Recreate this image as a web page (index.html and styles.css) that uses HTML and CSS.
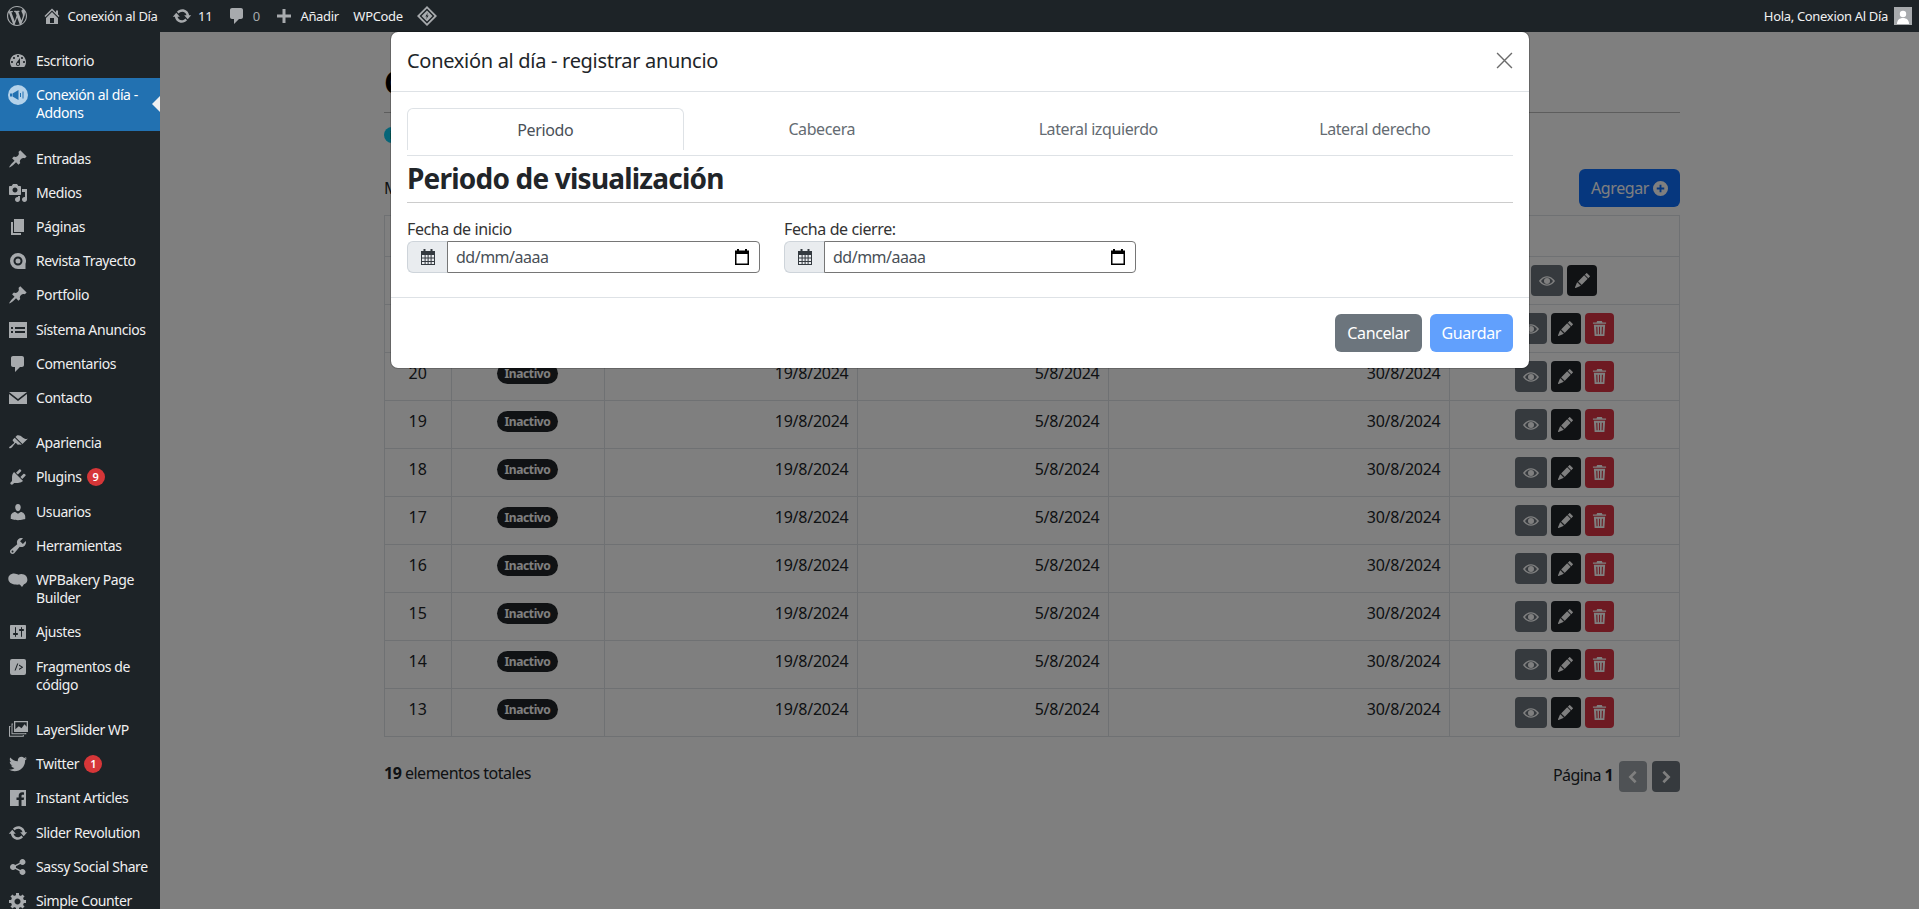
FILE: index.html
```html
<!DOCTYPE html>
<html lang="es">
<head>
    <meta charset="UTF-8">
    <meta name="viewport" content="width=device-width, initial-scale=1.0">
    <title>Conexión al día - Addons</title>
    <link rel="stylesheet" href="styles.css">
</head>
<body>
    <svg class="sprite" aria-hidden="true">
        <symbol id="i-wp" viewBox="0 0 20 20"><path d="M20 10c0-5.51-4.49-10-10-10C4.48 0 0 4.49 0 10c0 5.52 4.48 10 10 10 5.51 0 10-4.48 10-10zM7.78 15.37L4.37 6.22c.55-.02 1.17-.08 1.17-.08.5-.06.44-1.13-.06-1.11 0 0-1.45.11-2.37.11-.18 0-.37 0-.58-.01C4.12 2.69 6.87 1.11 10 1.11c2.33 0 4.45.87 6.05 2.34-.68-.11-1.65.39-1.65 1.58 0 .74.45 1.36.9 2.1.35.61.55 1.36.55 2.46 0 1.49-1.4 5-1.4 5l-3.03-8.37c.54-.02.82-.17.82-.17.5-.05.44-1.25-.06-1.22 0 0-1.44.12-2.38.12-.87 0-2.33-.12-2.33-.12-.5-.03-.56 1.2-.06 1.22l.92.08 1.26 3.41zM17.41 10c.24-.64.74-1.87.43-4.25.7 1.29 1.05 2.71 1.05 4.25 0 3.29-1.73 6.24-4.4 7.78.97-2.59 1.94-5.2 2.92-7.78zM6.1 18.09C3.12 16.65 1.11 13.53 1.11 10c0-1.3.23-2.48.72-3.59C3.25 10.3 4.67 14.2 6.1 18.09zm4.03-6.63l2.58 6.98c-.86.29-1.76.45-2.71.45-.79 0-1.57-.11-2.29-.33.81-2.38 1.62-4.74 2.42-7.1z"/></symbol>
        <symbol id="i-home" viewBox="0 0 20 20"><path d="M16 8.5l1.53 1.53-1.06 1.06L10 4.62l-6.47 6.47-1.06-1.06L10 2.5l4 4v-2h2v4zm-6-2.46l6 5.99V18H4v-5.97zM12 17v-5H8v5h4z"/></symbol>
        <symbol id="i-update" viewBox="0 0 20 20"><path d="M10.2 3.28c3.53 0 6.43 2.61 6.92 6h2.08l-3.5 4-3.5-4h2.32c-.45-1.97-2.21-3.45-4.32-3.45-1.45 0-2.73.71-3.54 1.78L4.95 5.66C6.23 4.2 8.11 3.28 10.2 3.28zm-.4 13.44c-3.52 0-6.43-2.61-6.92-6H.8l3.5-4c1.17 1.33 2.33 2.67 3.5 4H5.48c.45 1.97 2.21 3.45 4.32 3.45 1.45 0 2.73-.71 3.54-1.78l1.71 1.95c-1.28 1.46-3.15 2.38-5.25 2.38z"/></symbol>
        <symbol id="i-comment" viewBox="0 0 20 20"><path d="M5 2h9c1.1 0 2 .9 2 2v7c0 1.1-.9 2-2 2h-2l-5 5v-5H5c-1.1 0-2-.9-2-2V4c0-1.1.9-2 2-2z"/></symbol>
        <symbol id="i-plus" viewBox="0 0 20 20"><path d="M17 8.5v3h-5.5V17h-3v-5.5H3v-3h5.5V3h3v5.5z"/></symbol>
        <symbol id="i-diamond" viewBox="0 0 20 20"><path fill-rule="evenodd" d="M10 0l10 10-10 10L0 10zm0 2.6L2.6 10l7.4 7.4 7.4-7.4z"/><path fill-rule="evenodd" d="M10 4.5l5.5 5.5-5.5 5.5L4.5 10zm.8 2.2L8.4 10.6h1.5l-.7 2.7 2.4-3.9h-1.5z"/></symbol>
        <symbol id="i-dashboard" viewBox="0 0 20 20"><path d="M3.76 16h12.48c1.1-1.37 1.76-3.11 1.76-5 0-4.42-3.58-8-8-8s-8 3.58-8 8c0 1.89.66 3.63 1.76 5zM10 4c.55 0 1 .45 1 1s-.45 1-1 1-1-.45-1-1 .45-1 1-1zM6 6c.55 0 1 .45 1 1s-.45 1-1 1-1-.45-1-1 .45-1 1-1zm8 0c.55 0 1 .45 1 1s-.45 1-1 1-1-.45-1-1 .45-1 1-1zm-5.37 5.55L12 7v6c0 1.1-.9 2-2 2s-2-.9-2-2c0-.57.24-1.08.63-1.45zM4 10c.55 0 1 .45 1 1s-.45 1-1 1-1-.45-1-1 .45-1 1-1zm12 0c.55 0 1 .45 1 1s-.45 1-1 1-1-.45-1-1 .45-1 1-1zm-5 3c0-.55-.45-1-1-1s-1 .45-1 1 .45 1 1 1 1-.45 1-1z"/></symbol>
        <symbol id="i-megaphone" viewBox="0 0 20 20"><circle cx="10" cy="10" r="10" fill="#b4d2ea"/><path fill="#2271b1" d="M2 8.500h2v3H2zM4.500 8.500l6-3.500v10l-6-3.500zM12 8h1v4h-1zM14.500 6.500h1v7h-1z"/></symbol>
        <symbol id="i-pin" viewBox="0 0 20 20"><path d="M10.44 3.02l1.82-1.82 6.36 6.35-1.83 1.82c-1.05-.68-2.48-.57-3.41.36l-.75.75c-.92.93-1.04 2.35-.35 3.41l-1.83 1.82-2.41-2.41-2.8 2.79c-.42.42-3.38 2.71-3.8 2.29s1.86-3.39 2.28-3.81l2.79-2.79L4.1 9.36l1.83-1.82c1.05.69 2.48.57 3.4-.36l.75-.75c.93-.92 1.05-2.35.36-3.41z"/></symbol>
        <symbol id="i-media" viewBox="0 0 20 20"><path d="M13 11V4c0-.55-.45-1-1-1h-1.67L9 1H5L3.67 3H2c-.55 0-1 .45-1 1v7c0 .55.45 1 1 1h10c.55 0 1-.45 1-1zM7 4.500c1.380 0 2.500 1.120 2.500 2.500S8.380 9.500 7 9.500 4.500 8.380 4.500 7 5.620 4.500 7 4.500zM14 6h5v10.500c0 1.380-1.120 2.500-2.500 2.500S14 17.880 14 16.500s1.120-2.500 2.500-2.500c.17 0 .34.02.5.05V9h-3V6zm-4 8.050V13h2v3.500c0 1.380-1.120 2.500-2.500 2.500S7 17.880 7 16.500 8.120 14 9.500 14c.17 0 .34.02.5.05z"/></symbol>
        <symbol id="i-page" viewBox="0 0 20 20"><path d="M6 15V2h10v13H6zm-1 1h8v2H3V5h2v11z"/></symbol>
        <symbol id="i-revista" viewBox="0 0 20 20"><path fill-rule="evenodd" d="M10 2a8 8 0 0 1 7.500 10.800V18H10a8 8 0 0 1 0-16zm0 3.500a4.500 4.500 0 1 0 0 9 4.500 4.500 0 0 0 0-9zm0 2a2.500 2.500 0 1 1 0 5 2.500 2.500 0 0 1 0-5z"/></symbol>
        <symbol id="i-list" viewBox="0 0 20 20"><path fill-rule="evenodd" d="M1 2h18v16H1zM3 7v2h2V7zm4 0v2h10V7zm-4 4v2h2v-2zm4 0v2h10v-2z"/></symbol>
        <symbol id="i-email" viewBox="0 0 20 20"><path d="M1 4h18l-9 7zM1 6l9 7 9-7v10H1z"/></symbol>
        <symbol id="i-appearance" viewBox="0 0 20 20"><path d="M14.480 11.060L7.410 3.990l1.500-1.500c.5-.56 2.300-.47 3.510.32 1.210.8 1.430 1.280 2.910 2.100 1.180.64 2.450 1.260 4.450.85zm-.71.71L6.700 4.700 4.930 6.470c-.39.39-.39 1.020 0 1.410l1.060 1.060c.39.39.39 1.030 0 1.420-.6.6-1.430 1.110-2.210 1.690-.35.26-.7.53-1.010.84C1.430 13.230.76 14.550 1.300 15.100c.55.54 1.870-.13 3.210-1.470.31-.31.58-.66.84-1.010.58-.78 1.090-1.610 1.690-2.210.39-.39 1.020-.39 1.410 0l1.060 1.060c.39.39 1.020.39 1.410 0z"/></symbol>
        <symbol id="i-plugin" viewBox="0 0 20 20"><path d="M13.110 4.360L9.870 7.600 8 5.730l3.240-3.240c.35-.34 1.050-.2 1.560.32.52.51.66 1.210.31 1.550zm-8 1.770l.91-1.120 9.010 9.010-1.190.84c-.71.71-2.630 1.160-3.820 1.160H6.140L4.900 17.260c-.59.59-1.540.59-2.120 0-.59-.58-.59-1.530 0-2.120l1.240-1.240v-3.880c0-1.130.4-3.190 1.090-3.890zm7.260 3.970l3.240-3.240c.34-.35 1.040-.21 1.550.31.52.51.66 1.210.31 1.550l-3.240 3.250z"/></symbol>
        <symbol id="i-users" viewBox="0 0 20 20"><path d="M10 9.250c-2.270 0-2.730-3.440-2.730-3.440C7 4.020 7.820 2 9.970 2c2.160 0 2.980 2.020 2.710 3.810 0 0-.41 3.440-2.680 3.440zm0 2.570L12.720 10c2.390 0 4.520 2.330 4.520 4.530v2.490s-3.650 1.130-7.240 1.130c-3.650 0-7.240-1.130-7.240-1.130v-2.490c0-2.250 1.940-4.480 4.470-4.480z"/></symbol>
        <symbol id="i-tools" viewBox="0 0 20 20"><path d="M16.680 9.770c-1.340 1.340-3.300 1.670-4.950.99l-5.410 6.520c-.99.99-2.590.99-3.580 0s-.99-2.590 0-3.570l6.520-5.420c-.68-1.650-.35-3.610.99-4.950 1.280-1.280 3.120-1.620 4.720-1.060l-2.890 2.890 2.820 2.820 2.860-2.870c.53 1.580.18 3.390-1.080 4.650zM3.810 16.210c.4.39 1.040.39 1.430 0 .4-.4.4-1.040 0-1.430-.39-.4-1.030-.4-1.430 0-.39.39-.39 1.030 0 1.430z"/></symbol>
        <symbol id="i-bakery" viewBox="0 0 20 20"><path d="M6 3.500c2 0 3 .8 4.500 1.200C12 3.800 14 3.500 16 4.500c2.500 1.200 3.800 3.700 3.300 6.300-.4 2-1.800 3.100-3.300 3.400l-2 2.800-2.300-2.500c-1.600.2-3.300.2-5 0C3 14.100.4 12 .3 8.800.2 5.600 3 3.500 6 3.500z"/></symbol>
        <symbol id="i-settings" viewBox="0 0 20 20"><path d="M18 16V4c0-.55-.45-1-1-1H3c-.55 0-1 .45-1 1v12c0 .55.45 1 1 1h14c.55 0 1-.45 1-1zM8 11h1c.55 0 1 .45 1 1s-.45 1-1 1H8v1.500c0 .28-.22.5-.5.5s-.5-.22-.5-.5V13H6c-.55 0-1-.45-1-1s.45-1 1-1h1V5.500c0-.28.22-.5.5-.5s.5.22.5.500V11zm5-2h-1c-.55 0-1-.45-1-1s.45-1 1-1h1V5.500c0-.28.22-.5.5-.5s.5.22.5.5V7h1c.55 0 1 .45 1 1s-.45 1-1 1h-1v5.500c0 .28-.22.5-.5.5s-.5-.22-.5-.5V9z"/></symbol>
        <symbol id="i-code" viewBox="0 0 20 20"><path fill-rule="evenodd" d="M4 2h12a2 2 0 0 1 2 2v12a2 2 0 0 1-2 2H4a2 2 0 0 1-2-2V4a2 2 0 0 1 2-2zm5.200 4.500L6.500 13.500h1.100l2.700-7zM11 7.500v1.300l2.500 1.500-2.500 1.500v1.300l4-2.500v-.6z"/></symbol>
        <symbol id="i-layers" viewBox="0 0 20 20"><path fill-rule="evenodd" d="M6 1h14v11H6zm1.300 1.300v7l3.500-3 2.700 2 3-4 2.200 2.500V2.300z"/><path d="M3.500 3.500H5v1H4.500v8.800h12.800V13h1v1.300h-14.800z"/><path d="M1 6h1.500v1H2v8.800h12.800v-.8h1v1.800H1z"/></symbol>
        <symbol id="i-twitter" viewBox="0 0 20 20"><path d="M18.940 4.460c-.49.73-1.110 1.380-1.830 1.900.01.15.01.31.01.47 0 4.850-3.690 10.440-10.430 10.440-2.070 0-4-.61-5.630-1.650.29.03.58.05.88.05 1.720 0 3.300-.59 4.550-1.570-1.600-.03-2.950-1.090-3.420-2.550.22.04.45.07.69.07.33 0 .66-.05.96-.13-1.670-.34-2.940-1.820-2.940-3.600v-.04c.5.27 1.060.44 1.660.46-.98-.66-1.630-1.780-1.630-3.060 0-.67.18-1.300.5-1.840 1.810 2.220 4.510 3.680 7.560 3.830-.06-.27-.1-.55-.1-.84 0-2.020 1.650-3.660 3.670-3.660 1.060 0 2.010.44 2.680 1.160.83-.17 1.620-.47 2.330-.89-.28.85-.85 1.570-1.610 2.040.74-.09 1.440-.28 2.100-.57z"/></symbol>
        <symbol id="i-facebook" viewBox="0 0 20 20"><path d="M2 2h16v16h-4.500v-6h2.200l.4-2.500h-2.600V8c0-.8.3-1.300 1.300-1.300H16V4.400c-.4 0-1.100-.1-1.900-.1-2.100 0-3.400 1.200-3.400 3.400v1.800H8.500V12h2.200v6H2z"/></symbol>
        <symbol id="i-share" viewBox="0 0 20 20"><path d="M14.500 12q1.240 0 2.120.88T17.500 15t-.88 2.120-2.120.88-2.120-.88T11.500 15q0-.34.09-.69l-4.380-2.300Q6.320 13 5 13q-1.240 0-2.120-.88T2 10t.88-2.120T5 7q1.300 0 2.210.99l4.380-2.300q-.09-.35-.09-.69 0-1.240.88-2.120T14.500 2t2.120.88T17.500 5t-.88 2.120T14.500 8q-1.300 0-2.210-.99l-4.380 2.300Q8 9.660 8 10t-.09.69l4.380 2.300q.89-.99 2.210-.99z"/></symbol>
        <symbol id="i-gear" viewBox="0 0 20 20"><path d="M18 12h-2.180c-.17.7-.44 1.350-.81 1.930l1.540 1.540-2.100 2.100-1.540-1.540c-.58.36-1.230.63-1.910.79V19H8v-2.180c-.68-.16-1.330-.43-1.910-.79l-1.540 1.540-2.120-2.120 1.540-1.540c-.36-.58-.63-1.230-.79-1.910H1V9.030h2.170c.16-.7.44-1.350.8-1.940L2.430 5.550l2.100-2.100 1.540 1.540c.58-.37 1.240-.64 1.930-.81V2h3v2.180c.68.16 1.330.43 1.910.79l1.540-1.540 2.120 2.120-1.540 1.540c.36.59.64 1.240.8 1.940H18V12zm-8.500 1.500c1.660 0 3-1.340 3-3s-1.340-3-3-3-3 1.340-3 3 1.340 3 3 3z"/></symbol>
        <symbol id="i-eye" viewBox="0 0 16 16"><path fill-rule="evenodd" d="M0 8s3-4.800 8-4.800S16 8 16 8s-3 4.800-8 4.800S0 8 0 8zm8-3.600c-2.600 0-4.700 1.600-6 3.600 1.300 2 3.400 3.600 6 3.600s4.700-1.600 6-3.600c-1.300-2-3.400-3.600-6-3.600z"/><circle cx="8" cy="8" r="3"/></symbol>
        <symbol id="i-pencil" viewBox="0 0 16 16"><path d="M12.854.146a.5.5 0 0 0-.707 0L10.500 1.793 14.207 5.500l1.647-1.646a.5.5 0 0 0 0-.708l-3-3zm.646 6.061L9.793 2.500 3.293 9H3.500a.5.5 0 0 1 .5.500v.5h.5a.5.5 0 0 1 .5.5v.5h.5a.5.5 0 0 1 .5.5v.5h.5a.5.5 0 0 1 .5.5v.207l6.500-6.500zm-7.468 7.468A.5.5 0 0 1 6 13.500V13h-.5a.5.5 0 0 1-.5-.5V12h-.5a.5.5 0 0 1-.5-.5V11h-.5a.5.5 0 0 1-.5-.5V10h-.5a.499.499 0 0 1-.175-.032l-.179.178a.5.5 0 0 0-.11.168l-2 5a.5.5 0 0 0 .65.65l5-2a.5.5 0 0 0 .168-.11l.178-.178z"/></symbol>
        <symbol id="i-trash" viewBox="0 0 16 16"><path fill-rule="evenodd" d="M5.500 0h5l.7 1.500H15V3H1V1.500h3.800zM2 4h12l-.8 12H2.800zm2.500 2l.3 8h1.200l-.3-8zm3 0v8h1V6zm3 0l-.3 8h1.200l.3-8z"/></symbol>
        <symbol id="i-calendar" viewBox="0 0 16 16"><path fill-rule="evenodd" d="M3.500 0h2v2h5V0h2v2H15v14H1V2h2.500zM2 6v2.500h2.600V6zm3.600 0v2.500h2V6zm3 0v2.500h2V6zm3 0v2.500H14V6zM2 9.500V12h2.600V9.500zm3.600 0V12h2V9.500zm3 0V12h2V9.500zm3 0V12H14V9.500zM2 13v2h2.600v-2zm3.600 0v2h2v-2zm3 0v2h2v-2zm3 0v2H14v-2z"/></symbol>
        <symbol id="i-picker" viewBox="0 0 16 16"><path fill-rule="evenodd" d="M3 0h2v1.500h6V0h2v1.500h2V16H1V1.500h2zM2.500 5v9.500h11V5z"/></symbol>
    </svg>

    <header class="adminbar">
        <div class="bar-group">
            <a class="bar-item"><svg class="bar-icon"><use href="#i-wp"/></svg></a>
            <a class="bar-item"><svg class="bar-icon"><use href="#i-home"/></svg>Conexión al Día</a>
            <a class="bar-item"><svg class="bar-icon"><use href="#i-update"/></svg>11</a>
            <a class="bar-item bar-muted"><svg class="bar-icon"><use href="#i-comment"/></svg>0</a>
            <a class="bar-item"><svg class="bar-icon"><use href="#i-plus"/></svg>Añadir</a>
            <a class="bar-item">WPCode</a>
            <a class="bar-item"><svg class="bar-icon"><use href="#i-diamond"/></svg></a>
        </div>
        <a class="bar-user">Hola, Conexion Al Día
            <svg class="avatar" viewBox="0 0 16 16"><rect width="16" height="16" fill="#a7aaad"/><circle cx="8" cy="6" r="3.200" fill="#fff"/><path d="M2 16c0-4 2.500-6 6-6s6 2 6 6z" fill="#fff"/></svg>
        </a>
    </header>

    <div class="layout">
        <nav class="sidemenu">
            <a class="menu-item"><svg class="menu-icon"><use href="#i-dashboard"/></svg>Escritorio</a>
            <a class="menu-item active"><svg class="menu-icon"><use href="#i-megaphone"/></svg>Conexión al día - Addons</a>
            <div class="menu-sep"></div>
            <a class="menu-item"><svg class="menu-icon"><use href="#i-pin"/></svg>Entradas</a>
            <a class="menu-item"><svg class="menu-icon"><use href="#i-media"/></svg>Medios</a>
            <a class="menu-item"><svg class="menu-icon"><use href="#i-page"/></svg>Páginas</a>
            <a class="menu-item"><svg class="menu-icon"><use href="#i-revista"/></svg>Revista Trayecto</a>
            <a class="menu-item"><svg class="menu-icon"><use href="#i-pin"/></svg>Portfolio</a>
            <a class="menu-item"><svg class="menu-icon"><use href="#i-list"/></svg>Sístema Anuncios</a>
            <a class="menu-item"><svg class="menu-icon"><use href="#i-comment"/></svg>Comentarios</a>
            <a class="menu-item"><svg class="menu-icon"><use href="#i-email"/></svg>Contacto</a>
            <div class="menu-sep"></div>
            <a class="menu-item"><svg class="menu-icon"><use href="#i-appearance"/></svg>Apariencia</a>
            <a class="menu-item"><svg class="menu-icon"><use href="#i-plugin"/></svg>Plugins <span class="count">9</span></a>
            <a class="menu-item"><svg class="menu-icon"><use href="#i-users"/></svg>Usuarios</a>
            <a class="menu-item"><svg class="menu-icon"><use href="#i-tools"/></svg>Herramientas</a>
            <a class="menu-item"><svg class="menu-icon"><use href="#i-bakery"/></svg>WPBakery Page Builder</a>
            <a class="menu-item"><svg class="menu-icon"><use href="#i-settings"/></svg>Ajustes</a>
            <a class="menu-item"><svg class="menu-icon"><use href="#i-code"/></svg>Fragmentos de código</a>
            <div class="menu-sep"></div>
            <a class="menu-item"><svg class="menu-icon"><use href="#i-layers"/></svg>LayerSlider WP</a>
            <a class="menu-item"><svg class="menu-icon"><use href="#i-twitter"/></svg>Twitter <span class="count">1</span></a>
            <a class="menu-item"><svg class="menu-icon"><use href="#i-facebook"/></svg>Instant Articles</a>
            <a class="menu-item"><svg class="menu-icon"><use href="#i-update"/></svg>Slider Revolution</a>
            <a class="menu-item"><svg class="menu-icon"><use href="#i-share"/></svg>Sassy Social Share</a>
            <a class="menu-item"><svg class="menu-icon"><use href="#i-gear"/></svg>Simple Counter</a>
        </nav>

        <main class="content">
            <h1 class="page-title">C</h1>
            <p class="info-line"><span class="info-dot">i</span></p>
            <div class="toolbar">
                <span>M</span>
                <button class="btn btn-add">Agregar
                    <svg class="add-icon" viewBox="0 0 16 16"><path fill-rule="evenodd" d="M8 0a8 8 0 1 1 0 16A8 8 0 0 1 8 0zM7 4v3H4v2h3v3h2V9h3V7H9V4z"/></svg>
                </button>
            </div>

            <table class="ads">
                <colgroup>
                    <col class="c-id"><col class="c-state"><col class="c-date1"><col class="c-date2"><col class="c-date3"><col class="c-actions">
                </colgroup>
                <thead>
                    <tr><th></th><th></th><th></th><th></th><th></th><th></th></tr>
                </thead>
                <tbody>
                    <tr>
                        <td></td><td></td><td></td><td></td><td></td>
                        <td class="center"><a class="act act-view"><svg><use href="#i-eye"/></svg></a> <a class="act act-edit"><svg><use href="#i-pencil"/></svg></a></td>
                    </tr>
                    <tr>
                        <td></td><td></td><td></td><td></td><td></td>
                        <td class="center"><a class="act act-view"><svg><use href="#i-eye"/></svg></a> <a class="act act-edit"><svg><use href="#i-pencil"/></svg></a> <a class="act act-del"><svg><use href="#i-trash"/></svg></a></td>
                    </tr>
                    <tr>
                        <td class="center">20</td><td class="center"><span class="badge">Inactivo</span></td>
                        <td class="right">19/8/2024</td><td class="right">5/8/2024</td><td class="right">30/8/2024</td>
                        <td class="center"><a class="act act-view"><svg><use href="#i-eye"/></svg></a> <a class="act act-edit"><svg><use href="#i-pencil"/></svg></a> <a class="act act-del"><svg><use href="#i-trash"/></svg></a></td>
                    </tr>
                    <tr>
                        <td class="center">19</td><td class="center"><span class="badge">Inactivo</span></td>
                        <td class="right">19/8/2024</td><td class="right">5/8/2024</td><td class="right">30/8/2024</td>
                        <td class="center"><a class="act act-view"><svg><use href="#i-eye"/></svg></a> <a class="act act-edit"><svg><use href="#i-pencil"/></svg></a> <a class="act act-del"><svg><use href="#i-trash"/></svg></a></td>
                    </tr>
                    <tr>
                        <td class="center">18</td><td class="center"><span class="badge">Inactivo</span></td>
                        <td class="right">19/8/2024</td><td class="right">5/8/2024</td><td class="right">30/8/2024</td>
                        <td class="center"><a class="act act-view"><svg><use href="#i-eye"/></svg></a> <a class="act act-edit"><svg><use href="#i-pencil"/></svg></a> <a class="act act-del"><svg><use href="#i-trash"/></svg></a></td>
                    </tr>
                    <tr>
                        <td class="center">17</td><td class="center"><span class="badge">Inactivo</span></td>
                        <td class="right">19/8/2024</td><td class="right">5/8/2024</td><td class="right">30/8/2024</td>
                        <td class="center"><a class="act act-view"><svg><use href="#i-eye"/></svg></a> <a class="act act-edit"><svg><use href="#i-pencil"/></svg></a> <a class="act act-del"><svg><use href="#i-trash"/></svg></a></td>
                    </tr>
                    <tr>
                        <td class="center">16</td><td class="center"><span class="badge">Inactivo</span></td>
                        <td class="right">19/8/2024</td><td class="right">5/8/2024</td><td class="right">30/8/2024</td>
                        <td class="center"><a class="act act-view"><svg><use href="#i-eye"/></svg></a> <a class="act act-edit"><svg><use href="#i-pencil"/></svg></a> <a class="act act-del"><svg><use href="#i-trash"/></svg></a></td>
                    </tr>
                    <tr>
                        <td class="center">15</td><td class="center"><span class="badge">Inactivo</span></td>
                        <td class="right">19/8/2024</td><td class="right">5/8/2024</td><td class="right">30/8/2024</td>
                        <td class="center"><a class="act act-view"><svg><use href="#i-eye"/></svg></a> <a class="act act-edit"><svg><use href="#i-pencil"/></svg></a> <a class="act act-del"><svg><use href="#i-trash"/></svg></a></td>
                    </tr>
                    <tr>
                        <td class="center">14</td><td class="center"><span class="badge">Inactivo</span></td>
                        <td class="right">19/8/2024</td><td class="right">5/8/2024</td><td class="right">30/8/2024</td>
                        <td class="center"><a class="act act-view"><svg><use href="#i-eye"/></svg></a> <a class="act act-edit"><svg><use href="#i-pencil"/></svg></a> <a class="act act-del"><svg><use href="#i-trash"/></svg></a></td>
                    </tr>
                    <tr>
                        <td class="center">13</td><td class="center"><span class="badge">Inactivo</span></td>
                        <td class="right">19/8/2024</td><td class="right">5/8/2024</td><td class="right">30/8/2024</td>
                        <td class="center"><a class="act act-view"><svg><use href="#i-eye"/></svg></a> <a class="act act-edit"><svg><use href="#i-pencil"/></svg></a> <a class="act act-del"><svg><use href="#i-trash"/></svg></a></td>
                    </tr>
                </tbody>
            </table>

            <div class="table-foot">
                <span class="foot-total"><b>19</b> elementos totales</span>
                <div class="pager">
                    <span class="page-label">Página <b>1</b></span>
                    <a class="page-btn disabled"><svg viewBox="0 0 16 16"><path d="M11 2L5 8l6 6" /></svg></a>
                    <a class="page-btn"><svg viewBox="0 0 16 16"><path d="M5 2l6 6-6 6" /></svg></a>
                </div>
            </div>
            <div class="backdrop"></div>
        </main>
    </div>

    <div class="modal">
        <div class="modal-header">
            <h5 class="modal-title">Conexión al día - registrar anuncio</h5>
            <svg class="modal-close" viewBox="0 0 16 16"><path d="M1 1l14 14M15 1L1 15"/></svg>
        </div>
        <div class="modal-body">
            <div class="tabs">
                <a class="tab active">Periodo</a>
                <a class="tab">Cabecera</a>
                <a class="tab">Lateral izquierdo</a>
                <a class="tab">Lateral derecho</a>
            </div>
            <h3 class="section-title">Periodo de visualización</h3>
            <div class="date-row">
                <div>
                    <label class="field-label">Fecha de inicio</label>
                    <div class="input-group">
                        <span class="input-addon"><svg><use href="#i-calendar"/></svg></span>
                        <div class="date-input"><input type="text" placeholder="dd/mm/aaaa"><svg><use href="#i-picker"/></svg></div>
                    </div>
                </div>
                <div>
                    <label class="field-label">Fecha de cierre:</label>
                    <div class="input-group">
                        <span class="input-addon"><svg><use href="#i-calendar"/></svg></span>
                        <div class="date-input"><input type="text" placeholder="dd/mm/aaaa"><svg><use href="#i-picker"/></svg></div>
                    </div>
                </div>
            </div>
        </div>
        <div class="modal-footer">
            <button class="btn btn-cancel">Cancelar</button>
            <button class="btn btn-save">Guardar</button>
        </div>
    </div>
</body>
</html>
```

FILE: styles.css
```css
* {
    box-sizing: border-box;
}
html, body {
    height: 909px;
    overflow: hidden;
}
body {
    margin: 0;
    font-family: "Noto Sans", "Open Sans", sans-serif;
    font-size: 14px;
    color: #212529;
    background-color: #fff;
}
.sprite {
    display: none;
}

/* admin bar */
.adminbar {
    display: flex;
    justify-content: space-between;
    height: 32px;
    background-color: #1d2327;
    color: #f0f0f1;
    font-size: 13px;
    letter-spacing: -0.32px;
}
.bar-group {
    display: flex;
    padding-left: 7px;
}
.bar-item {
    display: flex;
    align-items: center;
    gap: 6px;
    padding-right: 14.5px;
}
.bar-icon {
    width: 20px;
    height: 20px;
    fill: #a7aaad;
}
.bar-muted {
    color: #a7aaad;
}
.bar-user {
    display: flex;
    align-items: center;
    gap: 6px;
    padding-right: 7px;
}
.avatar {
    width: 18px;
    height: 18px;
    border: 1px solid #a7aaad;
}

/* side menu */
.layout {
    display: flex;
    height: 877px;
}
.sidemenu {
    flex: 0 0 160px;
    padding-top: 12px;
    background-color: #1d2327;
    color: #f0f0f1;
    overflow: hidden;
}
.menu-item {
    display: block;
    position: relative;
    padding: 8px 8px 8px 36px;
    line-height: 18.2px;
    letter-spacing: -0.4px;
}
.menu-icon {
    position: absolute;
    left: 8px;
    top: 7px;
    width: 20px;
    height: 20px;
    fill: #a7aaad;
}
.menu-item.active {
    background-color: #2271b1;
    color: #fff;
}
.menu-item.active::after {
    content: "";
    position: absolute;
    right: 0;
    top: 18px;
    border: 8px solid transparent;
    border-left-width: 0;
    border-right-color: #f0f0f1;
}
.menu-sep {
    height: 11px;
}
.count {
    display: inline-block;
    width: 18px;
    height: 18px;
    margin-left: 2px;
    border-radius: 50%;
    background-color: #d63638;
    color: #fff;
    font-size: 11px;
    font-weight: 600;
    line-height: 18px;
    text-align: center;
    letter-spacing: 0;
    vertical-align: top;
}

/* page under the modal */
.content {
    position: relative;
    flex: 1;
    padding: 30px 239px 0 224px;
    font-size: 16px;
}
.backdrop {
    position: absolute;
    inset: 0;
    background-color: rgba(0, 0, 0, 0.5);
}
.page-title {
    margin: 0;
    padding-bottom: 10px;
    border-bottom: 1px solid #bbb;
    font-size: 32px;
    line-height: 40px;
    color: #000;
}
.info-line {
    display: flex;
    align-items: center;
    height: 20px;
    margin: 12px 0 0;
    font-size: 13px;
}
.info-dot {
    width: 16px;
    height: 16px;
    border-radius: 50%;
    background-color: #0dcaf0;
    color: #212529;
    font-size: 11px;
    font-weight: 700;
    line-height: 16px;
    text-align: center;
}
.toolbar {
    display: flex;
    justify-content: space-between;
    align-items: center;
    margin-top: 24px;
}
.btn {
    display: inline-flex;
    align-items: center;
    height: 38px;
    padding: 0 12px;
    border: 0;
    border-radius: 6px;
    color: #fff;
    font-family: inherit;
    font-size: 16px;
    letter-spacing: -0.4px;
}
.btn-add {
    gap: 4px;
    background-color: #0d6efd;
}
.add-icon {
    width: 15px;
    height: 15px;
    fill: #fff;
}
.btn-cancel {
    background-color: #6c757d;
}
.btn-save {
    background-color: #0d6efd;
    opacity: 0.65;
}

/* table */
.ads {
    width: 100%;
    margin-top: 8px;
    border-collapse: collapse;
    table-layout: fixed;
}
.c-id { width: 66.5px; }
.c-state { width: 153px; }
.c-date1 { width: 253px; }
.c-date2 { width: 251px; }
.c-date3 { width: 341px; }
.ads th, .ads td {
    border: 1px solid #dee2e6;
    padding: 8px;
    font-weight: 400;
    line-height: 25px;
    vertical-align: top;
}
.ads th {
    height: 41px;
}
.ads td {
    height: 48px;
}
.center {
    text-align: center;
}
.right {
    text-align: right;
    letter-spacing: -0.25px;
}
.badge {
    display: inline-block;
    height: 21px;
    margin-top: 2px;
    padding: 0 8px;
    border-radius: 11px;
    background-color: #212529;
    color: #fff;
    font-size: 12px;
    font-weight: 700;
    line-height: 21px;
    letter-spacing: -0.4px;
    vertical-align: top;
}
.act {
    display: inline-flex;
    justify-content: center;
    align-items: center;
    width: 30px;
    height: 31px;
    border-radius: 4px;
    vertical-align: top;
}
.act svg {
    width: 15px;
    height: 15px;
    fill: #fff;
}
.act-view {
    width: 32px;
    background-color: #6c757d;
}
.act-view svg {
    width: 16px;
    height: 16px;
}
.act-edit {
    background-color: #212529;
}
.act-del {
    width: 29px;
    background-color: #dc3545;
}
.table-foot {
    display: flex;
    justify-content: space-between;
    margin-top: 24px;
}
.foot-total {
    line-height: 24px;
    letter-spacing: -0.5px;
}
.pager {
    display: flex;
    align-items: center;
    gap: 5px;
}
.page-label {
    margin: 0 1px 3px 0;
    letter-spacing: -0.6px;
}
.page-btn {
    display: flex;
    justify-content: center;
    align-items: center;
    width: 28px;
    height: 31px;
    border-radius: 4px;
    background-color: #6c757d;
}
.page-btn.disabled {
    opacity: 0.65;
}
.page-btn svg {
    width: 14px;
    height: 14px;
    fill: none;
    stroke: #fff;
    stroke-width: 3;
}

/* modal */
.modal {
    position: absolute;
    top: 31px;
    left: 390px;
    width: 1140px;
    height: 338px;
    border: 1px solid rgba(0, 0, 0, 0.2);
    border-radius: 8px;
    background-color: #fff;
    background-clip: padding-box;
    font-size: 16px;
    letter-spacing: -0.4px;
}
.modal-header {
    display: flex;
    justify-content: space-between;
    align-items: center;
    height: 60px;
    padding: 0 16px 2px;
    border-bottom: 1px solid #dee2e6;
}
.modal-title {
    margin: 0;
    font-size: 20px;
    font-weight: 400;
    letter-spacing: -0.3px;
}
.modal-close {
    width: 17px;
    height: 17px;
    fill: none;
    stroke: #6b6b6b;
    stroke-width: 1.300;
}
.modal-body {
    height: 205px;
    padding: 16px 16px 0;
}
.tabs {
    display: grid;
    grid-template-columns: repeat(4, 1fr);
    height: 48px;
    border-bottom: 1px solid #dee2e6;
}
.tab {
    height: 42px;
    padding-top: 9px;
    line-height: 24px;
    text-align: center;
    color: #646b72;
}
.tab.active {
    border: 1px solid #dee2e6;
    border-bottom: 0;
    border-radius: 6px 6px 0 0;
    color: #495057;
}
.section-title {
    margin: 0;
    height: 47px;
    border-bottom: 1px solid #ccc;
    font-size: 28px;
    font-weight: 700;
    line-height: 44px;
    letter-spacing: -0.8px;
}
.date-row {
    display: grid;
    grid-template-columns: 353px 352px;
    gap: 24px;
    margin-top: 14px;
}
.field-label {
    display: block;
    height: 24px;
    line-height: 24px;
    color: #333;
}
.input-group {
    display: flex;
    height: 32px;
}
.input-addon {
    display: flex;
    justify-content: center;
    align-items: center;
    width: 40px;
    border: 1px solid #ced4da;
    border-right: 0;
    border-radius: 6px 0 0 6px;
    background-color: #e9ecef;
}
.input-addon svg {
    width: 16px;
    height: 16px;
    fill: #343a40;
}
.date-input {
    flex: 1;
    display: flex;
    align-items: center;
    padding-right: 9px;
    border: 1px solid #767676;
    border-radius: 0 4px 4px 0;
}
.date-input input {
    flex: 1;
    min-width: 0;
    padding: 0 8px;
    border: 0;
    outline: 0;
    font-family: inherit;
    font-size: 16px;
    letter-spacing: -0.5px;
}
.date-input input::placeholder {
    color: #495057;
    opacity: 1;
}
.date-input svg {
    width: 16px;
    height: 16px;
    fill: #000;
}
.modal-footer {
    display: flex;
    justify-content: flex-end;
    gap: 8px;
    padding: 16px;
    border-top: 1px solid #dee2e6;
}
```
